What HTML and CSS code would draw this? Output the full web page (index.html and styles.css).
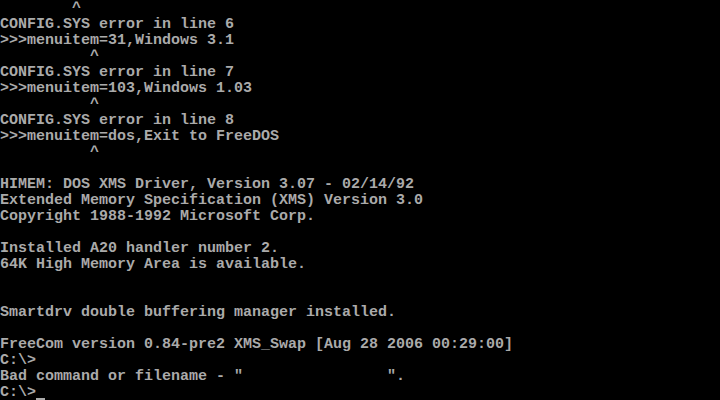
FILE: index.html
```html
<!DOCTYPE html>
<html lang="en">
<head>
  <meta charset="UTF-8" />
  <meta name="viewport" content="width=device-width, initial-scale=1.0"/>
  <title>FreeDOS boot</title>
  <link rel="stylesheet" href="styles.css">
</head>
<body>
  <pre class="screen">        ^
CONFIG.SYS error in line 6
>>>menuitem=31,Windows 3.1
          ^
CONFIG.SYS error in line 7
>>>menuitem=103,Windows 1.03
          ^
CONFIG.SYS error in line 8
>>>menuitem=dos,Exit to FreeDOS
          ^

HIMEM: DOS XMS Driver, Version 3.07 - 02/14/92
Extended Memory Specification (XMS) Version 3.0
Copyright 1988-1992 Microsoft Corp.

Installed A20 handler number 2.
64K High Memory Area is available.


Smartdrv double buffering manager installed.

FreeCom version 0.84-pre2 XMS_Swap [Aug 28 2006 00:29:00]
C:\>
Bad command or filename - "                ".
C:\><span class="cursor"></span></pre>
</body>
</html>
```

FILE: styles.css
```css
html, body {
  margin: 0;
  padding: 0;
  background: #000;
  overflow: hidden;
}

.screen {
  margin: 0;
  padding-top: 1px;
  width: 720px;
  height: 399px;
  font-family: "Liberation Mono", "DejaVu Sans Mono", monospace;
  font-size: 15px;
  font-weight: bold;
  line-height: 16px;
  color: #aaaaaa;
  white-space: pre;
}

.cursor {
  display: inline-block;
  width: 9px;
  height: 15px;
  vertical-align: top;
  box-sizing: border-box;
  border-bottom: 2px solid #aaaaaa;
}
```
